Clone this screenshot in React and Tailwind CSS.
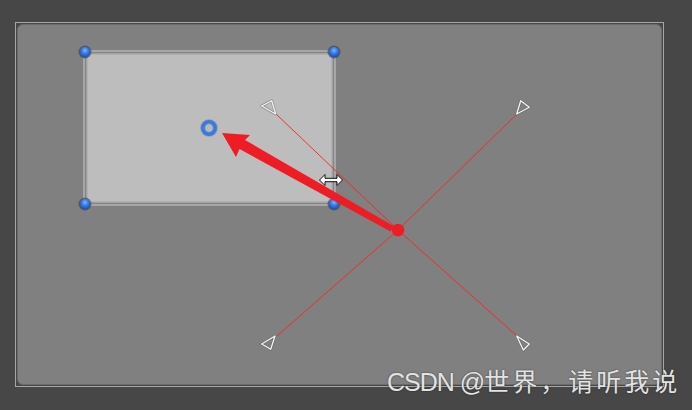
export default function App() {
  return (
    <div className="relative w-[692px] h-[410px] bg-[#474747] overflow-hidden pt-[22px] pl-[15px]">
      <div className="w-[649px] h-[365px] border border-[#a6a6a6] p-px">
        <div className="w-full h-full rounded-[6px] bg-[#808080] border border-[#6c6c6c]" />
      </div>

      <svg className="absolute inset-0" width="692" height="410" viewBox="0 0 692 410">
        <defs>
          <radialGradient id="blue" cx="50%" cy="35%" r="60%">
            <stop offset="0%" stopColor="#7db4ff" />
            <stop offset="55%" stopColor="#2f78ea" />
            <stop offset="100%" stopColor="#1a56c0" />
          </radialGradient>
        </defs>

        {/* selected rect */}
        <rect x="85" y="52" width="249" height="152" rx="2" fill="#bdbdbd" stroke="#858585" strokeWidth="3" />
        <rect x="84" y="51" width="251" height="154" rx="2" fill="none" stroke="#c8c8c8" strokeWidth="1" />
        <rect x="87" y="54" width="245" height="148" fill="none" stroke="#a4a4a4" strokeWidth="1" />

        {/* light lines */}
        <g stroke="#ff2222" strokeWidth="1" opacity="0.9">
          <line x1="398" y1="230" x2="276" y2="114" />
          <line x1="398" y1="230" x2="517" y2="114" />
          <line x1="398" y1="230" x2="277" y2="336" />
          <line x1="398" y1="230" x2="517" y2="336" />
        </g>

        {/* cones */}
        <g fill="none" strokeLinejoin="round">
          <g stroke="#5a5a5a" strokeWidth="2.6" opacity="0.5">
            <polygon points="261.7,106 271.7,100.7 275.7,114" />
            <polygon points="516.7,114 520.7,100.7 529.3,107.3" />
            <polygon points="261.7,344 275,336 270.7,349.3" />
            <polygon points="516.7,336 529.3,344 523.3,350" />
          </g>
          <g stroke="#f4f4f4" strokeWidth="1.3">
            <polygon points="261.7,106 271.7,100.7 275.7,114" />
            <polygon points="516.7,114 520.7,100.7 529.3,107.3" />
            <polygon points="261.7,344 275,336 270.7,349.3" />
            <polygon points="516.7,336 529.3,344 523.3,350" />
          </g>
        </g>

        {/* corner handles */}
        {[[85, 52], [334, 52], [85, 204], [334, 204]].map(([cx, cy]) => (
          <g key={cx + "-" + cy}>
            <circle cx={cx} cy={cy} r="6.5" fill="#3c3c3c" opacity="0.6" />
            <circle cx={cx} cy={cy} r="5.2" fill="url(#blue)" />
          </g>
        ))}

        {/* pivot */}
        <circle cx="209" cy="128" r="9" fill="#7f8590" opacity="0.5" />
        <circle cx="209" cy="128" r="6.2" fill="none" stroke="#3a7ae0" strokeWidth="3.6" />
        <circle cx="209" cy="128" r="3.5" fill="#b4b9c2" />

        {/* red arrow */}
        <polygon
          points="222,133 250,135 245,140 393.5,226 390.5,231.5 239.5,149 236,157"
          fill="#ee1c25"
        />

        {/* light */}
        <circle cx="398" cy="230" r="6.3" fill="#ee1c25" />

        {/* resize cursor */}
        <path
          d="M319.5,180 L325,174.5 L325,178.3 L337,178.3 L337,174.5 L342.5,180 L337,185.5 L337,181.7 L325,181.7 L325,185.5 Z"
          fill="#ffffff"
          stroke="#111111"
          strokeWidth="1"
          strokeLinejoin="miter"
        />
      </svg>

      <div
        className="absolute left-[387px] top-[367px] whitespace-nowrap text-[25px] leading-[30px] text-[#e3e3e3] [text-shadow:0_0_2px_rgba(0,0,0,0.55)]"
        style={{ fontFamily: '"Liberation Sans", "Noto Sans CJK SC", sans-serif' }}
      >
        <span className="tracking-[-1px]">CSDN @</span>
        <span className="tracking-[3px]">世界，请听我说</span>
      </div>
    </div>
  );
}
